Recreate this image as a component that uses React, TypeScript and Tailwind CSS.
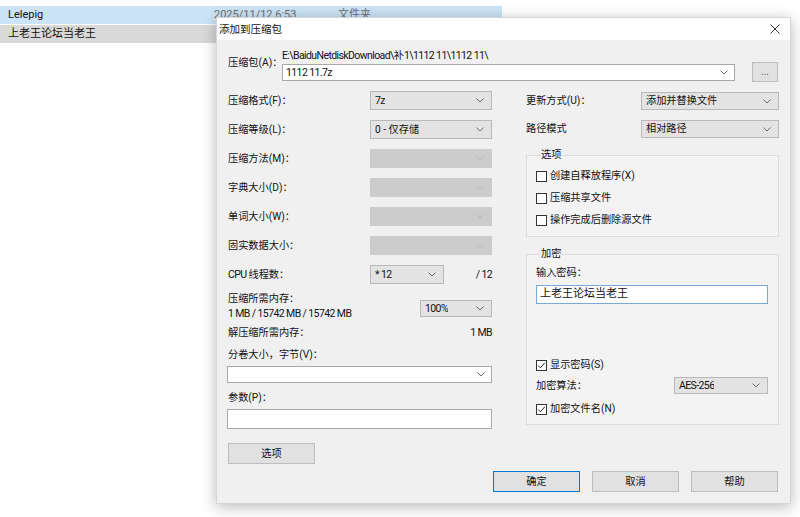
import React from "react";

function Chevron({ light }: { light?: boolean }) {
  return (
    <svg width="8" height="5" viewBox="0 0 8 5" className="shrink-0">
      <path d="M0.5 0.5 L4 4 L7.5 0.5" fill="none" stroke={light ? "#b8b8b8" : "#6a6a6a"} strokeWidth="1" />
    </svg>
  );
}

function L({ children }: { children: React.ReactNode }) {
  return <span className="text-[10.5px] tracking-[-0.6px]">{children}</span>;
}

function Select({ value, className, disabled }: { value?: React.ReactNode; className: string; disabled?: boolean }) {
  return (
    <div
      className={
        "flex items-center justify-between pl-[4px] pr-[7px] " +
        (disabled ? "bg-[#cccccc] border border-[#cccccc] " : "bg-[#e3e3e3] border border-[#b9b9b9] ") +
        className
      }
    >
      <span className="truncate">{value}</span>
      <Chevron light={disabled} />
    </div>
  );
}

function Check({ checked, label }: { checked?: boolean; label: string }) {
  return (
    <div className="flex items-center h-[14px] leading-[14px]">
      <span className="w-[11px] h-[11px] border border-[#333333] bg-white flex items-center justify-center shrink-0">
        {checked && (
          <svg width="9" height="9" viewBox="0 0 9 9">
            <path d="M1.2 4.6 L3.4 6.8 L7.8 1.8" fill="none" stroke="#222" strokeWidth="1" />
          </svg>
        )}
      </span>
      <span className="ml-[3px]">{label}</span>
    </div>
  );
}

function Btn({ label, className }: { label: string; className: string }) {
  return (
    <div className={"flex items-center justify-center bg-[#e1e1e1] " + className}>{label}</div>
  );
}

export default function App() {
  const leftRows: { label: string; value?: React.ReactNode; disabled?: boolean }[] = [
    { label: "压缩格式(F)：", value: <L>7z</L> },
    { label: "压缩等级(L)：", value: "0 - 仅存储" },
    { label: "压缩方法(M)：", disabled: true },
    { label: "字典大小(D)：", disabled: true },
    { label: "单词大小(W)：", disabled: true },
    { label: "固实数据大小：", disabled: true },
  ];
  return (
    <div className="relative w-[800px] h-[517px] bg-white overflow-hidden text-[10.2px] text-[#111111] font-['Roboto','Noto_Sans_CJK_SC',sans-serif] whitespace-nowrap">
      {/* file list behind */}
      <div className="flex flex-col pt-[6px] text-[11px]">
        <div className="flex items-center h-[18px] w-[502px] bg-[#cce4f7]">
          <span className="pl-[8px] w-[214px]">Lelepig</span>
          <span className="w-[124px] text-[#6d6d6d]">2025/11/12 6:53</span>
          <span className="text-[#6d6d6d]">文件夹</span>
        </div>
        <div className="flex items-center h-[18px] w-[502px] mt-[1px] bg-[#d9d9d9]">
          <span className="pl-[8px]">上老王论坛当老王</span>
        </div>
      </div>

      {/* dialog */}
      <div className="absolute left-[216px] top-[17px] w-[575px] h-[487px] flex flex-col border border-[#d6d6d6] shadow-[0_3px_14px_rgba(0,0,0,0.28)]">
        <div className="h-[22px] bg-white flex items-center justify-between pl-[2px] pr-[10px]">
          <span className="text-[10.5px] mt-[1px]">添加到压缩包</span>
          <svg width="10" height="10" viewBox="0 0 10 10">
            <path d="M0.5 0.5 L9.5 9.5 M9.5 0.5 L0.5 9.5" stroke="#333" strokeWidth="1" />
          </svg>
        </div>
        <div className="flex-1 bg-[#f0f0f0] px-[11px] pt-[9px] flex flex-col">
          {/* archive row */}
          <div className="flex items-start">
            <span className="w-[54px] mt-[7px] leading-[14px]">压缩包(A)：</span>
            <div className="flex flex-col w-[453px]">
              <span className="h-[14px] leading-[14px]">
                <L>E:\BaiduNetdiskDownload\</L>补<L>1\1112 11\1112 11\</L>
              </span>
              <div className="mt-[1px] h-[17px] bg-white border border-[#a8a8a8] flex items-center justify-between pl-[3px] pr-[6px]">
                <L>1112 11.7z</L>
                <Chevron />
              </div>
            </div>
            <Btn label="..." className="ml-[17px] mt-[13px] w-[26px] h-[20px] border border-[#bdbdbd] text-[#555]" />
          </div>

          {/* columns */}
          <div className="flex mt-[9px] gap-[34px]">
            {/* left */}
            <div className="w-[264px] flex flex-col">
              <div className="flex flex-col gap-[10px]">
                {leftRows.map((r) => (
                  <div key={r.label} className="flex items-center h-[19px]">
                    <span className="w-[142px]">{r.label}</span>
                    <Select value={r.value} disabled={r.disabled} className="w-[122px] h-[19px]" />
                  </div>
                ))}
                <div className="flex items-center h-[19px]">
                  <span className="w-[142px]">
                    <L>CPU </L>线程数：
                  </span>
                  <Select value={<L>* 12</L>} className="w-[74px] h-[19px]" />
                  <span className="ml-auto">
                    <L>/ 12</L>
                  </span>
                </div>
              </div>
              <div className="flex items-start mt-[7px]">
                <div className="flex flex-col leading-[15px]">
                  <span>压缩所需内存：</span>
                  <L>1 MB / 15742 MB / 15742 MB</L>
                </div>
                <Select value={<L>100%</L>} className="ml-auto mt-[9px] w-[72px] h-[17px]" />
              </div>
              <div className="flex justify-between mt-[5px] leading-[14px]">
                <span>解压缩所需内存：</span>
                <L>1 MB</L>
              </div>
              <span className="mt-[8px] leading-[14px]">分卷大小，字节(V)：</span>
              <div className="mt-[4px] -ml-[1px] w-[265px] h-[17px] bg-white border border-[#a8a8a8] flex items-center justify-end pr-[6px]">
                <Chevron />
              </div>
              <span className="mt-[8px] leading-[14px]">参数(P)：</span>
              <div className="mt-[4px] -ml-[1px] w-[265px] h-[20px] bg-white border border-[#a8a8a8]" />
              <Btn label="选项" className="mt-[14px] w-[87px] h-[21px] border border-[#bdbdbd]" />
            </div>

            {/* right */}
            <div className="w-[253px] flex flex-col mt-[1px]">
              <div className="flex flex-col gap-[10px]">
                <div className="flex items-center h-[18px]">
                  <span className="w-[115px]">更新方式(U)：</span>
                  <Select value="添加并替换文件" className="w-[138px] h-[18px]" />
                </div>
                <div className="flex items-center h-[18px]">
                  <span className="w-[115px]">路径模式</span>
                  <Select value="相对路径" className="w-[138px] h-[18px]" />
                </div>
              </div>
              <fieldset className="mt-[10px] border border-[#dcdcdc] bg-[#f3f3f3] pl-[9px] pr-[10px] pt-[7px] pb-[9px] flex flex-col gap-[8px]">
                <legend className="ml-[5px] leading-[14px]">选项</legend>
                <Check label="创建自释放程序(X)" />
                <Check label="压缩共享文件" />
                <Check label="操作完成后删除源文件" />
              </fieldset>
              <fieldset className="mt-[10px] border border-[#dcdcdc] bg-[#f3f3f3] pl-[9px] pr-[10px] pt-[5px] pb-[8px] flex flex-col">
                <legend className="ml-[5px] leading-[14px]">加密</legend>
                <span className="leading-[14px]">输入密码：</span>
                <div className="mt-[5px] h-[19px] bg-white border border-[#7aa9d9] flex items-center pl-[3px] text-[11px]">
                  上老王论坛当老王
                </div>
                <div className="mt-[54px]">
                  <Check checked label="显示密码(S)" />
                </div>
                <div className="mt-[5px] flex items-center justify-between h-[17px]">
                  <span>加密算法：</span>
                  <Select value={<L>AES-256</L>} className="w-[94px] h-[17px]" />
                </div>
                <div className="mt-[8px]">
                  <Check checked label="加密文件名(N)" />
                </div>
              </fieldset>
            </div>
          </div>

          {/* buttons */}
          <div className="flex justify-end gap-[12px] mt-[7px] pr-[1px]">
            <Btn label="确定" className="w-[87px] h-[21px] border border-[#0078d7]" />
            <Btn label="取消" className="w-[87px] h-[21px] border border-[#bdbdbd]" />
            <Btn label="帮助" className="w-[87px] h-[21px] border border-[#bdbdbd]" />
          </div>
        </div>
      </div>
    </div>
  );
}
